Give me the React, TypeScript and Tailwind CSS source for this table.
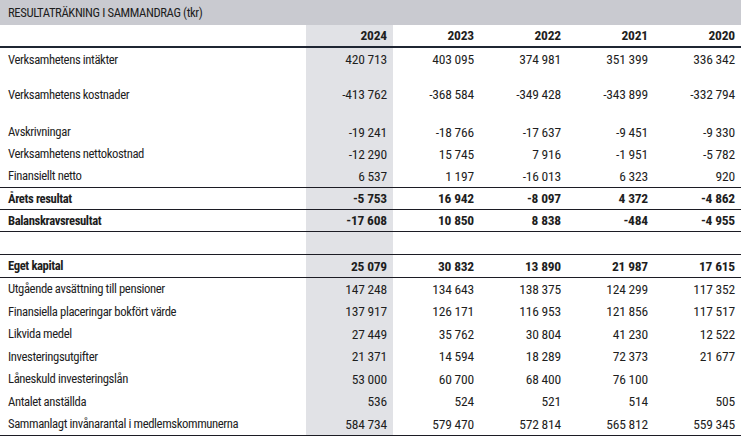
import React from "react";

type RowProps = {
  h: string;
  label?: string;
  values?: string[];
  bold?: boolean;
  lineBottom?: boolean;
};

function Row({ h, label, values, bold, lineBottom }: RowProps) {
  const vals = values ?? ["", "", "", "", ""];
  return (
    <div
      className={`grid grid-cols-[306px_87px_87px_87px_87px_87px] ${h} ${
        lineBottom ? "border-b border-[#1c1c24]" : ""
      } ${bold ? "font-bold" : "font-normal"}`}
    >
      <div className="flex items-center pl-[8px] pt-[1px] whitespace-nowrap text-[12.7px] tracking-[-0.4px]">
        {label}
      </div>
      {vals.map((v, i) => (
        <div
          key={i}
          className={`flex items-center justify-end pr-[6px] pt-[1px] whitespace-nowrap text-[13.5px] tracking-[-0.2px] ${
            i === 0 ? "bg-[#e1e2e6]" : ""
          }`}
        >
          {v}
        </div>
      ))}
    </div>
  );
}

export default function App() {
  return (
    <div className="w-[743px] h-[437px] bg-white text-[#1e1e1e] leading-none overflow-hidden font-['Roboto_Condensed','DejaVu_Sans_Condensed',sans-serif]">
      <div className="w-[741px]">
        <div className="h-[25px] bg-[#c9cad0] flex items-center pl-[8px] pt-[1px] text-[12.7px] tracking-[-0.4px]">
          RESULTATRÄKNING I SAMMANDRAG (tkr)
        </div>
        <div className="border-b-2 border-[#1f2633]">
          <Row h="h-[21px]" bold values={["2024", "2023", "2022", "2021", "2020"]} />
        </div>
        <Row h="h-[23px]" label="Verksamhetens intäkter" values={["420 713", "403 095", "374 981", "351 399", "336 342"]} />
        <Row h="h-[12px]" />
        <Row h="h-[23px]" label="Verksamhetens kostnader" values={["-413 762", "-368 584", "-349 428", "-343 899", "-332 794"]} />
        <Row h="h-[15px]" />
        <Row h="h-[22px]" label="Avskrivningar" values={["-19 241", "-18 766", "-17 637", "-9 451", "-9 330"]} />
        <Row h="h-[22px]" label="Verksamhetens nettokostnad" values={["-12 290", "15 745", "7 916", "-1 951", "-5 782"]} />
        <Row h="h-[23px]" lineBottom label="Finansiellt netto" values={["6 537", "1 197", "-16 013", "6 323", "920"]} />
        <Row h="h-[22px]" lineBottom bold label="Årets resultat" values={["-5 753", "16 942", "-8 097", "4 372", "-4 862"]} />
        <Row h="h-[22px]" lineBottom bold label="Balanskravsresultat" values={["-17 608", "10 850", "8 838", "-484", "-4 955"]} />
        <Row h="h-[23px]" lineBottom />
        <Row h="h-[23px]" lineBottom bold label="Eget kapital" values={["25 079", "30 832", "13 890", "21 987", "17 615"]} />
        <Row h="h-[22px]" label="Utgående avsättning till pensioner" values={["147 248", "134 643", "138 375", "124 299", "117 352"]} />
        <Row h="h-[23px]" label="Finansiella placeringar bokfört värde" values={["137 917", "126 171", "116 953", "121 856", "117 517"]} />
        <Row h="h-[22px]" label="Likvida medel" values={["27 449", "35 762", "30 804", "41 230", "12 522"]} />
        <Row h="h-[23px]" label="Investeringsutgifter" values={["21 371", "14 594", "18 289", "72 373", "21 677"]} />
        <Row h="h-[22px]" label="Låneskuld investeringslån" values={["53 000", "60 700", "68 400", "76 100", ""]} />
        <Row h="h-[23px]" label="Antalet anställda" values={["536", "524", "521", "514", "505"]} />
        <Row h="h-[23px]" lineBottom label="Sammanlagt invånarantal i medlemskommunerna" values={["584 734", "579 470", "572 814", "565 812", "559 345"]} />
      </div>
    </div>
  );
}
